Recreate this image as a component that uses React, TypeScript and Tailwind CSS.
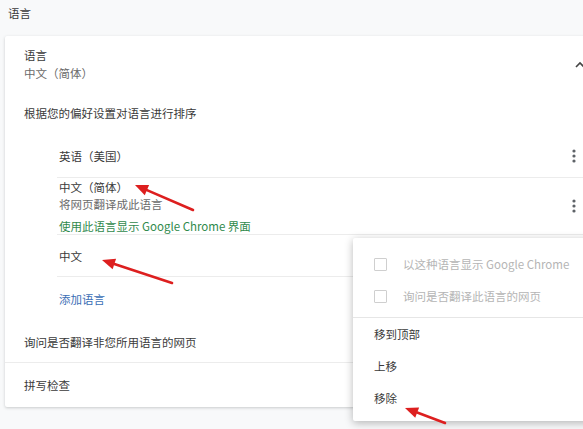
import React from "react";

type Pt = [number, number];

function Arrow({ from, to }: { from: Pt; to: Pt }) {
  const dx = to[0] - from[0];
  const dy = to[1] - from[1];
  const len = Math.hypot(dx, dy);
  const ux = dx / len;
  const uy = dy / len;
  const hl = 13;
  const hw = 5.5;
  const bx = to[0] - ux * hl;
  const by = to[1] - uy * hl;
  const head = `${to[0]},${to[1]} ${bx - uy * hw},${by + ux * hw} ${bx + uy * hw},${by - ux * hw}`;
  return (
    <g>
      <line x1={from[0]} y1={from[1]} x2={bx} y2={by} stroke="#dd1f1f" strokeWidth={2.6} strokeLinecap="round" />
      <polygon points={head} fill="#dd1f1f" />
    </g>
  );
}

function MoreIcon() {
  return (
    <svg width="6" height="16" viewBox="0 0 6 16" className="shrink-0">
      <circle cx="3" cy="3" r="1.6" fill="#5f6368" />
      <circle cx="3" cy="8" r="1.6" fill="#5f6368" />
      <circle cx="3" cy="13" r="1.6" fill="#5f6368" />
    </svg>
  );
}

function Checkbox() {
  return <span className="h-[13px] w-[13px] shrink-0 rounded-[1px] border-[1.5px] border-[#cfcfcf]" />;
}

export default function App() {
  return (
    <div
      className="relative h-[429px] w-[583px] overflow-hidden bg-[#f8f9fa] text-[11.5px] leading-[18px] text-[#3a3a3a]"
      style={{ fontFamily: '"Noto Sans CJK SC", "Noto Sans", sans-serif' }}
    >
      <div className="h-[36px] pl-2 pt-[4px]">语言</div>

      <div className="ml-[5px] w-[600px] rounded-[2px] bg-white shadow-[0_1px_3px_rgba(60,64,67,0.25)]">
        <div className="flex items-start justify-between pl-[19px] pr-[20px] pt-[10px]">
          <div>
            <div>语言</div>
            <div className="text-[#6b6b6b]">中文（简体）</div>
          </div>
          <svg width="10" height="7" viewBox="0 0 10 7" className="mt-[15px]">
            <path d="M1 6 L5 2 L9 6" fill="none" stroke="#444" strokeWidth="1.6" />
          </svg>
        </div>

        <div className="mt-[22px] pl-[19px]">根据您的偏好设置对语言进行排序</div>

        <div className="mt-[12px] pl-[52px]">
          <div className="flex h-[44px] items-center justify-between border-b border-[#ececec] pl-[2px] pr-[28px]">
            <span>英语（美国）</span>
            <MoreIcon />
          </div>
          <div className="flex h-[57px] items-center justify-between border-b border-[#ececec] pl-[2px] pr-[28px]">
            <div className="leading-[16px]">
              <div>中文（简体）</div>
              <div className="mt-[1px] text-[#6b6b6b]">将网页翻译成此语言</div>
              <div className="mt-[6px] text-[#2f8a4c]">使用此语言显示 Google Chrome 界面</div>
            </div>
            <MoreIcon />
          </div>
          <div className="flex h-[42px] items-center border-b border-[#ececec] pl-[2px]">中文</div>
          <div className="flex h-[44px] items-center pl-[2px] text-[#3b6eb5]">添加语言</div>
        </div>

        <div className="flex h-[42px] items-center border-b border-[#ececec] pl-[19px]">询问是否翻译非您所用语言的网页</div>
        <div className="flex h-[44px] items-center pl-[19px]">拼写检查</div>
      </div>

      <div className="absolute left-[353px] top-[238px] w-[250px] rounded-[2px] bg-white pb-[7px] pt-[10px] shadow-[0_2px_8px_rgba(0,0,0,0.28)]">
        <div className="border-b border-[#e6e6e6] pb-[5px]">
          <div className="flex h-[32px] items-center gap-[16px] pl-[21px] text-[#b5b5b5]">
            <Checkbox />
            <span>以这种语言显示 Google Chrome</span>
          </div>
          <div className="flex h-[32px] items-center gap-[16px] pl-[21px] text-[#b5b5b5]">
            <Checkbox />
            <span>询问是否翻译此语言的网页</span>
          </div>
        </div>
        <div className="flex h-[32px] items-center pl-[21px]">移到顶部</div>
        <div className="flex h-[32px] items-center pl-[21px]">上移</div>
        <div className="flex h-[32px] items-center pl-[21px]">移除</div>
      </div>

      <svg className="pointer-events-none absolute left-0 top-0" width="583" height="429">
        <Arrow from={[193, 210]} to={[135, 185]} />
        <Arrow from={[172, 283]} to={[102, 260]} />
        <Arrow from={[445, 423]} to={[405, 408]} />
      </svg>
    </div>
  );
}
